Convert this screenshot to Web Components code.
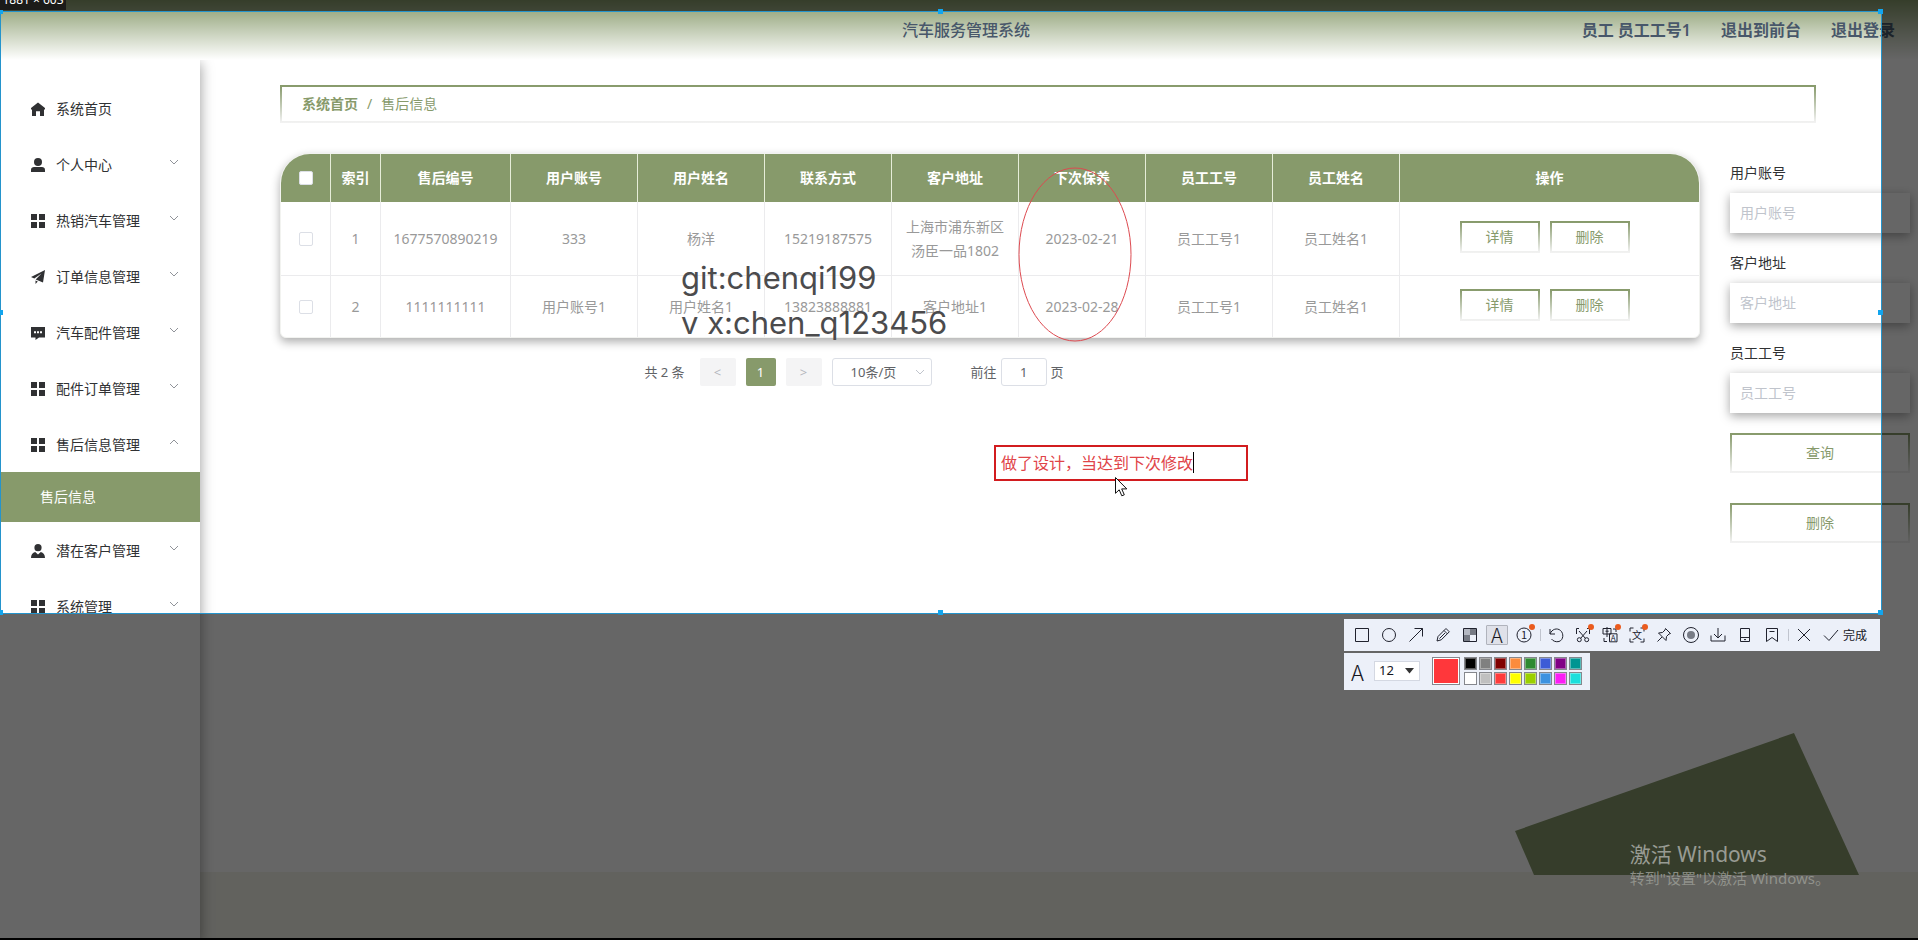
<!DOCTYPE html>
<html lang="zh-CN">
<head>
<meta charset="utf-8">
<title>汽车服务管理系统</title>
<style>
  html, body { margin: 0; height: 100%; overflow: hidden; }
  body {
    --green: #879a6b;
    --edge: linear-gradient(#879a6b, #f2f2f2) 1;
    font: 14px/20px "Noto Sans", "Noto Sans CJK SC", sans-serif;
    color: #303133;
    background: #fff;
  }
</style>
</head>
<body>
<service-app></service-app>

<script>
const define = (name, html, setup) => {
  const template = document.createElement('template');
  template.innerHTML = html;
  customElements.define(name, class extends HTMLElement {
    constructor() {
      super();
      this.attachShadow({ mode: 'open' }).append(template.content.cloneNode(true));
    }
    connectedCallback() { if (setup) setup.call(this, this.shadowRoot); }
  });
};

/* ---------- sidebar icons ---------- */
const menuIcons = {
  home: '<path d="M7 0.5 0 6v1.6h1V14h4V9.2h4V14h4V7.600h1V6z"/>',
  user: '<circle cx="7" cy="4" r="4"/><path d="M0 14v-2.200C0 10 1.500 9 3 9h8c1.500 0 3 1 3 2.800V14z"/>',
  grid: '<path d="M0 0h6v6H0zM8 0h6v6H8zM0 8h6v6H0zM8 8h6v6H8z"/>',
  plane: '<path d="M14 0 0 7l3.300 1.600L10.500 3.500 4.700 9.600 12 12.500zM4.500 10.500V14l2.300-2.500z"/>',
  chat: '<path fill-rule="evenodd" d="M0 1h14v10.500H8L4.500 14v-2.500H0zM3 5.200v2h2v-2zM6 5.200v2h2v-2zM9 5.200v2h2v-2z"/>',
  custom: '<circle cx="7" cy="3.700" r="3.600"/><path d="M0 14c0-3.500 1.600-5.300 4.200-6L7 10.600 9.800 8c2.600.7 4.200 2.500 4.200 6z"/>'
};

define('menu-item', `
  <style>
    :host { display: block; }
    a { display: flex; align-items: center; box-sizing: border-box; height: 56px; padding: 2px 21px 0 31px; color: #303133; text-decoration: none; }
    .icon { width: 14px; height: 14px; margin-right: 11px; fill: #303133; }
    .label { flex: 1; }
    .arrow { width: 10px; height: 6px; margin-bottom: 6px; fill: none; stroke: #909399; }
    :host([open]) .arrow { transform: rotate(180deg); }
    :host([plain]) .arrow { display: none; }
  </style>
  <a href="#"><svg class="icon" viewBox="0 0 14 14"></svg><span class="label"><slot></slot></span>
    <svg class="arrow" viewBox="0 0 10 6"><path d="M1 1l4 4 4-4"/></svg></a>
  <slot name="sub"></slot>`,
  function (root) { root.querySelector('.icon').innerHTML = menuIcons[this.getAttribute('icon')]; });

define('menu-sub', `
  <style>
    :host { display: block; background: var(--green); }
    a { display: flex; align-items: center; height: 50px; padding-left: 40px; color: #fff; text-decoration: none; }
  </style>
  <a href="#"><slot></slot></a>`);

define('side-menu', `
  <style>
    :host { display: block; flex: none; width: 200px; background: #fff; box-shadow: 1px 3px 12px rgba(0,0,0,.36); clip-path: inset(0 -30px 0 0); z-index: 1; }
    nav { padding-top: 20px; }
  </style>
  <nav>
    <menu-item icon="home" plain>系统首页</menu-item>
    <menu-item icon="user">个人中心</menu-item>
    <menu-item icon="grid">热销汽车管理</menu-item>
    <menu-item icon="plane">订单信息管理</menu-item>
    <menu-item icon="chat">汽车配件管理</menu-item>
    <menu-item icon="grid">配件订单管理</menu-item>
    <menu-item icon="grid" open>售后信息管理</menu-item>
    <menu-sub>售后信息</menu-sub>
    <menu-item icon="custom">潜在客户管理</menu-item>
    <menu-item icon="grid">系统管理</menu-item>
  </nav>`);

/* ---------- header ---------- */
define('app-header', `
  <style>
    :host { display: grid; grid-template-columns: 1fr auto 1fr; align-items: center; height: 60px; padding: 0 23px 0 37px;
      background: linear-gradient(#879a6b, #fff); font-size: 16px; font-weight: 500; color: #48576a; }
    h1 { grid-column: 2; margin: 0; font: inherit; }
    nav { display: flex; justify-content: flex-end; gap: 30px; font-weight: 600; }
    a { color: inherit; text-decoration: none; }
  </style>
  <h1><slot></slot></h1>
  <nav><span>员工 员工工号1</span><a href="#">退出到前台</a><a href="#">退出登录</a></nav>`);

/* ---------- content ---------- */
define('crumb-bar', `
  <style>
    :host { display: block; border: 2px solid; border-image: var(--edge); color: var(--green); }
    nav { display: flex; align-items: center; gap: 9px; height: 34px; padding: 0 20px; }
    a { color: inherit; text-decoration: none; font-weight: 600; }
  </style>
  <nav aria-label="breadcrumb"><a href="#">系统首页</a><span>/</span><span><slot></slot></span></nav>`);

define('line-button', `
  <style>
    :host { display: block; width: 80px; height: 32px; }
    button { width: 100%; height: 100%; padding: 0; border: 2px solid; border-image: var(--edge); background: #fff; color: var(--green); font: inherit; }
  </style>
  <button type="button"><slot></slot></button>`);

define('record-table', `
  <style>
    :host { display: block; border: 1px solid #f2f3f0; border-radius: 30px 30px 6px 6px; box-shadow: 0 4px 10px rgba(0,0,0,.32); overflow: hidden; background: #fff; }
    table { width: 100%; table-layout: fixed; border-collapse: separate; border-spacing: 0; text-align: center; color: #999; }
    th, td { padding: 0; border-right: 1px solid #ebebed; }
    th { height: 48px; background: var(--green); color: #fff; font-weight: 700; border-color: #e6edd8; }
    td { line-height: 24px; border-bottom: 1px solid #ebebed; }
    th:last-child, td:last-child { border-right: 0; }
    tr:last-child td { border-bottom: 0; }
    tbody tr { height: 61px; }
    tbody tr.tall { height: 74px; }
    .check { width: 50px; } .code { width: 130px; } .ops { width: 299px; }
    .address { padding: 0 10px; }
    input { appearance: none; display: block; width: 14px; height: 14px; margin: 0 auto; border: 1px solid #dcdfe6; border-radius: 2px; background: #fff; }
    .buttons { display: flex; justify-content: center; gap: 10px; padding: 0 10px 4px 0; line-height: 20px; }
  </style>
  <table>
    <colgroup><col class="check"><col class="check"><col class="code"><col span="7"><col class="ops"></colgroup>
    <thead><tr></tr></thead>
    <tbody></tbody>
  </table>`,
  root => {
    const heads = ['索引', '售后编号', '用户账号', '用户姓名', '联系方式', '客户地址', '下次保养', '员工工号', '员工姓名', '操作'];
    const rows = [
      ['1', '1677570890219', '333', '杨洋', '15219187575', '上海市浦东新区汤臣一品1802', '2023-02-21', '员工工号1', '员工姓名1'],
      ['2', '1111111111', '用户账号1', '用户姓名1', '13823888881', '客户地址1', '2023-02-28', '员工工号1', '员工姓名1']
    ];
    root.querySelector('thead tr').innerHTML =
      '<th><input type="checkbox" aria-label="全选"></th>' + heads.map(h => `<th>${h}</th>`).join('');
    root.querySelector('tbody').innerHTML = rows.map((r, i) =>
      `<tr class="${i ? '' : 'tall'}"><td><input type="checkbox" aria-label="选择 ${r[0]}"></td>` +
      r.map((c, k) => `<td class="${k === 5 ? 'address' : ''}">${c}</td>`).join('') +
      '<td><div class="buttons"><line-button>详情</line-button><line-button>删除</line-button></div></td></tr>').join('');
  });

define('page-nav', `
  <style>
    :host { display: flex; justify-content: center; align-items: center; height: 28px; font-size: 13px; color: #606266; }
    button { height: 28px; padding: 0; border: 0; border-radius: 2px; background: #f4f4f5; color: #b4b7bd; font: inherit; width: 36px; }
    .current { width: 30px; margin: 0 10px; background: var(--green); color: #fff; }
    .total { margin-right: 15px; }
    .size { position: relative; margin: 0 39px 0 10px; }
    select { appearance: none; display: block; box-sizing: border-box; width: 100px; height: 28px; padding: 0 18px; border: 1px solid #dcdfe6; border-radius: 3px; background: #fff; color: #606266; font: inherit; }
    .size svg { position: absolute; right: 7px; top: 11px; width: 10px; height: 6px; fill: none; stroke: #c0c4cc; }
    label { display: flex; align-items: center; gap: 4px; }
    input { box-sizing: border-box; width: 46px; height: 28px; padding: 0; border: 1px solid #dcdfe6; border-radius: 3px; text-align: center; font: inherit; color: #606266; }
  </style>
  <span class="total">共 2 条</span>
  <button type="button" aria-label="上一页">&lt;</button>
  <button type="button" class="current">1</button>
  <button type="button" aria-label="下一页">&gt;</button>
  <span class="size"><select aria-label="每页条数"><option>10条/页</option></select><svg viewBox="0 0 10 6"><path d="M1 1l4 4 4-4"/></svg></span>
  <label>前往 <input type="text" value="1"> 页</label>`);

define('filter-field', `
  <style>
    :host { display: block; height: 80px; }
    label { display: block; line-height: 40px; }
    input { display: block; box-sizing: border-box; width: 100%; height: 40px; padding: 0 10px 2px; border: 0; background: #fff; font: inherit; box-shadow: 0 3px 10px rgba(0,0,0,.36); }
    input::placeholder { color: #c0c4cc; opacity: 1; }
  </style>
  <label for="field"><slot></slot></label><input id="field" type="text">`,
  function (root) { root.querySelector('input').placeholder = this.textContent; });

define('filter-form', `
  <style>
    :host { display: block; flex: none; width: 180px; }
    form { display: flex; flex-direction: column; }
    filter-field { margin-bottom: 10px; }
    line-button { width: 100%; height: 40px; margin: 10px 0 20px; }
  </style>
  <form>
    <filter-field>用户账号</filter-field><filter-field>客户地址</filter-field><filter-field>员工工号</filter-field>
    <line-button>查询</line-button><line-button>删除</line-button>
  </form>`);

define('after-sales-page', `
  <style>
    :host { display: flex; flex-direction: column; flex: 1; min-width: 0; }
    .top { flex: 1; box-sizing: border-box; padding: 25px 8px 0 80px; }
    crumb-bar { margin-right: 94px; }
    .body { display: flex; align-items: flex-start; gap: 30px; margin-top: 30px; }
    .list { flex: 1; min-width: 0; }
    page-nav { margin: 20px 272px 0 0; }
    .shape { display: block; width: 344px; height: 142px; margin: 0 59px -3px auto; fill: var(--green); position: relative; }
    footer { flex: none; height: 68px; background: #f4f4ec; }
  </style>
  <div class="top">
    <crumb-bar>售后信息</crumb-bar>
    <div class="body">
      <div class="list"><record-table></record-table><page-nav></page-nav></div>
      <filter-form></filter-form>
    </div>
  </div>
  <svg class="shape" viewBox="0 0 344 142"><path d="M0 98 279 0 344 142H19z"/></svg>
  <footer></footer>`);

/* ---------- screen-capture layer ---------- */
const toolIcons = {
  rect: '<path d="M1.500 1.500h13v13h-13z"/>',
  oval: '<circle cx="8" cy="8" r="6.500"/>',
  arrow: '<path d="M1.500 14.500 14.500 1.500M6.500 1.500h8v8"/>',
  pen: '<path d="M2 14l1-4.500 8-8 3.300 3.300-8 8zM9 3.500l3.300 3.300M4.500 11.500 10 6"/>',
  mosaic: '<path d="M1.500 1.500h13v13h-13z"/><path d="M8 2h6v6H8zM2 8h6v6H2z" fill="#777b85" stroke="none"/><path d="M2 2h6v6H2z" fill="#b4b8c2" stroke="none"/>',
  step: '<circle cx="8" cy="8" r="7"/><text x="8" y="12" font-size="11" text-anchor="middle">1</text>',
  undo: '<path d="M2 2v5h5M2 7C4 2 9 .5 12.500 3.500S15.500 13 11 14.500c-3 .8-6-.4-7.500-2.500"/>',
  scissors: '<path d="M4 1.500H1.500V5M12 1.500h2.500V5M1.500 5v2M14.500 5v2M4 4l6.500 7.500M12 4l-6.500 7.500"/><circle cx="4.300" cy="12.700" r="2"/><circle cx="11.700" cy="12.700" r="2"/>',
  translate: '<path d="M1 1.500h8V7H1zM3.500 4.200h3.200M5 0v10M7.500 6.800h7.500v8H7.500z"/><path d="M2 11v3.500h3M11 2h3v3"/><text x="11.300" y="14" font-size="8" text-anchor="middle">A</text>',
  ocr: '<path d="M1 4.500V1h3.500M11.500 1H15v3.500M15 11.500V15h-3.500M4.500 15H1v-3.500"/><text x="8" y="12" font-size="10" text-anchor="middle">文</text>',
  pin: '<path d="M9.500 1.500l5 5-1.500.5-2.500 2.500-.5 4L2.500 6l4-.5L9 3zM1.500 14.500 6 10"/>',
  record: '<circle cx="8" cy="8" r="7.500"/><circle cx="8" cy="8" r="4" fill="#777b85" stroke="none"/>',
  save: '<path d="M8 1v9.500M4 7l4 4 4-4M1 8.500V14h14V8.500"/>',
  phone: '<path d="M3.500 1.500h9v13h-9zM3.500 10.500h9M7 12.600h2"/>',
  mark: '<path d="M2.500 1.500h11v13L8 10.500l-5.500 4zM5.500 4.500h5"/>',
  close: '<path d="M2 2l12 12M14 2 2 14"/>',
  check: '<path d="M1 8.500 6 13.500 15 3"/>'
};

define('tool-button', `
  <style>
    :host { display: block; position: relative; }
    button { display: flex; align-items: center; gap: 4px; box-sizing: border-box; height: 20px; min-width: 22px; padding: 0 2px; border: 1px solid transparent; border-radius: 1px; background: none; font: 12px/16px "Noto Sans CJK SC", sans-serif; color: #16161e; white-space: nowrap; }
    :host([active]) button { border-color: #b0b3bc; background: #dfe1e9; }
    svg { width: 16px; height: 16px; fill: none; stroke: #20222e; }
    svg text { fill: #20222e; stroke: none; font-family: "Noto Sans CJK SC", sans-serif; }
    i { display: none; position: absolute; right: 0; top: -1px; width: 6px; height: 6px; border-radius: 50%; background: #ea5b1e; }
    :host([dot]) i { display: block; }
    .letter { font-size: 20px; font-weight: 300; width: 16px; text-align: center; }
  </style>
  <button type="button"><slot></slot></button><i></i>`,
  function (root) {
    const name = this.getAttribute('icon');
    const button = root.querySelector('button');
    button.insertAdjacentHTML('afterbegin', name === 'text'
      ? '<span class="letter">A</span>' : `<svg viewBox="0 0 16 16">${toolIcons[name]}</svg>`);
    button.setAttribute('aria-label', this.textContent || name);
  });

define('capture-tools', `
  <style>
    :host { display: flex; flex-direction: column; align-items: flex-start; gap: 2px; color: #16161e; font-size: 13px; }
    .row { display: flex; align-items: center; background: #ecf0f9; box-sizing: border-box; }
    .tools { gap: 5px; width: 536px; height: 32px; padding-left: 7px; }
    hr { width: 1px; height: 12px; margin: 0 -1px 0 0; border: 0; background: #c0c4ce; }
    .style { height: 37px; padding: 0 8px 2px 7px; }
    .letter { width: 16px; font: 300 22px/22px "Noto Sans CJK SC", sans-serif; }
    .size { position: relative; margin: 0 12px 0 7px; }
    select { appearance: none; display: block; width: 46px; height: 20px; padding: 0 4px 2px; border: 1px solid #d4d8e2; background: #fff; font: inherit; line-height: 16px; color: inherit; border-radius: 0; }
    .size svg { position: absolute; right: 6px; top: 7px; width: 9px; height: 6px; fill: #333; }
    button { padding: 0; border: 1px solid #85878d; background: var(--c); box-shadow: inset 0 0 0 1px rgba(255,255,255,.35); }
    .big { width: 28px; height: 28px; margin-right: 4px; box-shadow: inset 0 0 0 1px #fff; }
    .palette { display: grid; grid-template-columns: repeat(8, 13px); grid-auto-rows: 13px; gap: 2px; }
  </style>
  <div class="row tools" role="toolbar">
    <tool-button icon="rect"></tool-button><tool-button icon="oval"></tool-button><tool-button icon="arrow"></tool-button>
    <tool-button icon="pen"></tool-button><tool-button icon="mosaic"></tool-button><tool-button icon="text" active></tool-button>
    <tool-button icon="step" dot></tool-button><hr>
    <tool-button icon="undo"></tool-button><tool-button icon="scissors" dot></tool-button><tool-button icon="translate" dot></tool-button>
    <tool-button icon="ocr" dot></tool-button><tool-button icon="pin"></tool-button><tool-button icon="record"></tool-button>
    <tool-button icon="save"></tool-button><tool-button icon="phone"></tool-button><tool-button icon="mark"></tool-button><hr>
    <tool-button icon="close"></tool-button><tool-button icon="check">完成</tool-button>
  </div>
  <div class="row style">
    <span class="letter">A</span>
    <span class="size"><select aria-label="字号"><option>12</option></select><svg viewBox="0 0 9 6"><path d="M0 0h9L4.500 5.500z"/></svg></span>
    <button type="button" class="big" style="--c:#ff373b" aria-label="当前颜色"></button>
    <div class="palette"></div>
  </div>`,
  root => {
    const colours = ['#000', '#808080', '#800000', '#fb8b3c', '#2f8a31', '#3d5bd6', '#800085', '#009592',
                     '#fff', '#c0c0c0', '#ff3b3b', '#ffff00', '#9bd000', '#3c92e0', '#fb1cf5', '#1adfdc'];
    root.querySelector('.palette').innerHTML =
      colours.map(c => `<button type="button" style="--c:${c}" aria-label="${c}"></button>`).join('');
  });

define('note-box', `
  <style>
    :host { display: block; box-sizing: border-box; width: 254px; height: 36px; border: 2px solid #d21c1f; }
    input { box-sizing: border-box; width: 100%; height: 100%; padding: 0 5px 2px; border: 0; background: none; color: #df4448; font: inherit; font-size: 16px; outline: 0; }
    i { position: absolute; left: 197px; top: 5px; width: 1px; height: 21px; background: #000; }
  </style>
  <input type="text" aria-label="批注" value="做了设计，当达到下次修改"><i></i>`);

define('capture-layer', `
  <style>
    :host { position: absolute; inset: 0; overflow: hidden; z-index: 2; }
    :host > * { position: absolute; }
    .selection { left: 0; right: 36px; top: 11px; height: 603px; box-sizing: border-box; border: 1px solid #2494cc; box-shadow: 0 0 0 3000px rgba(0,0,0,.6); }
    .selection i { position: absolute; width: 5px; height: 5px; margin: -3px; background: #12a5ee; }
    .dims { left: 0; top: -10px; height: 20px; width: 66px; background: #1b1b19; color: #fff; font-size: 12px; line-height: 20px; text-align: center; white-space: nowrap; }
    .mark { left: 681px; top: 255px; font: 31px/45px Inter, "Noto Sans CJK SC", sans-serif; color: #4b4b4d; }
    .mark p { margin: 0; white-space: nowrap; }
    .ring { left: 1018px; top: 167px; width: 114px; height: 175px; fill: none; stroke: #dd4a50; }
    note-box { left: 994px; top: 445px; }
    .pointer { left: 1115px; top: 477px; width: 13px; height: 20px; fill: #fff; stroke: #111; }
    capture-tools { right: 38px; top: 619px; }
    .activate { right: 88px; bottom: 51px; color: #999b94; font-size: 15px; line-height: 22px; opacity: .85; }
    .activate p { margin: 0; }
    .activate .big { font-size: 21px; line-height: 26px; color: #aaaca6; }
    .task { left: 0; right: 0; bottom: 0; height: 2px; background: #000; }
  </style>
  <div class="selection">
    <i style="left:0;top:0"></i><i style="left:50%;top:0"></i><i style="left:100%;top:0"></i>
    <i style="left:0;top:50%"></i><i style="left:100%;top:50%"></i>
    <i style="left:0;top:100%"></i><i style="left:50%;top:100%"></i><i style="left:100%;top:100%"></i>
  </div>
  <div class="dims">1881 × 603</div>
  <svg class="ring" viewBox="0 0 114 175"><ellipse cx="57" cy="87.500" rx="56" ry="86.500"/></svg>
  <div class="mark"><p>git:chenqi199</p><p>v x:chen_q123456</p></div>
  <note-box></note-box>
  <svg class="pointer" viewBox="0 0 13 20"><path d="M.5.5v15.800l3.700-3.500 2.600 6 2.500-1-2.600-5.900h5.100z"/></svg>
  <capture-tools></capture-tools>
  <div class="activate"><p class="big">激活 Windows</p><p>转到"设置"以激活 Windows。</p></div>
  <div class="task"></div>`);

define('service-app', `
  <style>
    :host { display: flex; flex-direction: column; position: relative; height: 100vh; overflow: hidden; }
    .main { display: flex; flex: 1; min-height: 0; }
  </style>
  <app-header>汽车服务管理系统</app-header>
  <div class="main"><side-menu></side-menu><after-sales-page></after-sales-page></div>
  <capture-layer></capture-layer>`);
</script>
</body>
</html>
